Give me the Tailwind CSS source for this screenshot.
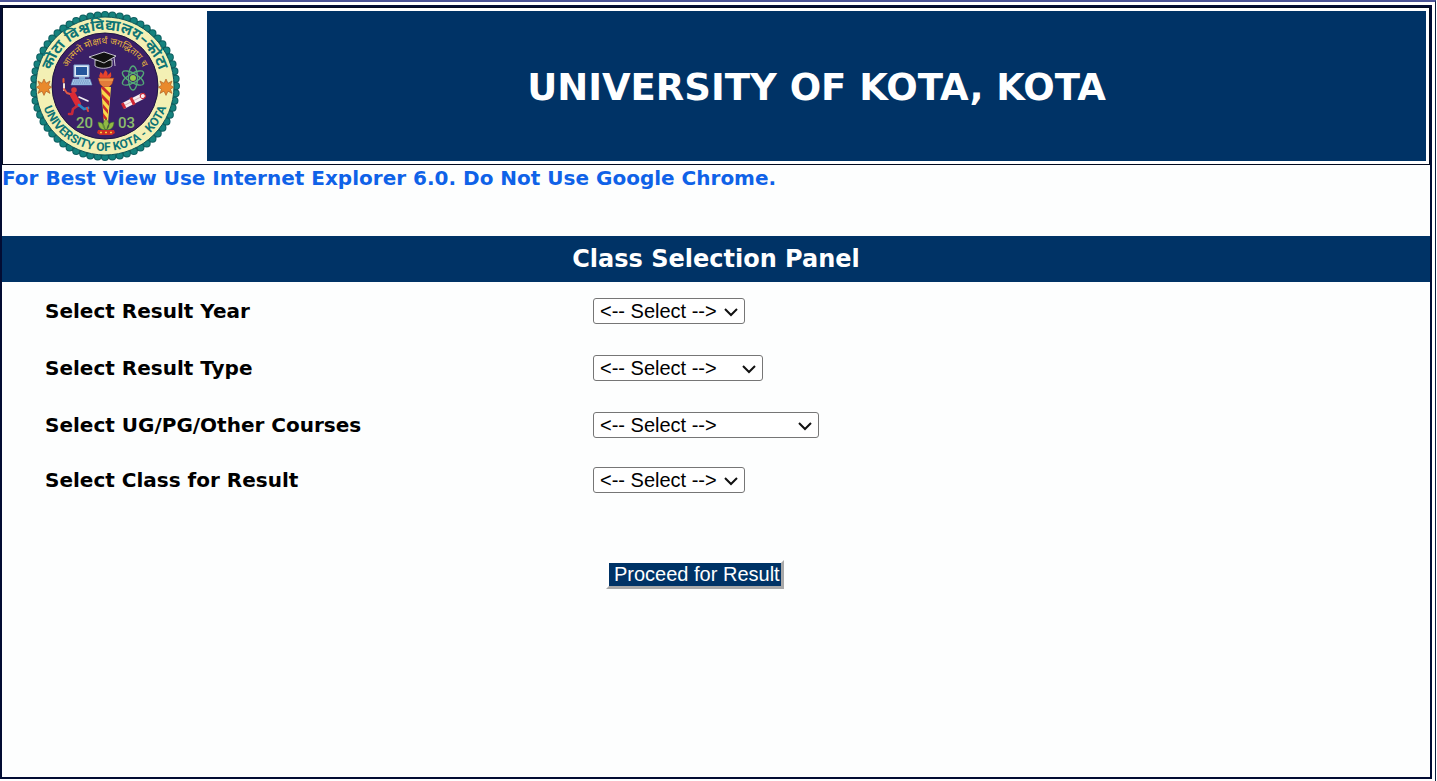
<!DOCTYPE html>
<html lang="en">
<head>
    <meta charset="UTF-8">
    <meta name="viewport" content="width=device-width, initial-scale=1.0">
    <title>University of Kota, Kota</title>
    <script src="https://cdn.jsdelivr.net/npm/@tailwindcss/browser@4"></script>
</head>
<body class="bg-white font-['DejaVu_Sans',sans-serif] text-black">
    <div class="mr-px flex min-h-screen flex-col border-t-2 border-r border-t-[#4a5296] border-r-[#0b1f3f] pt-[3px] pr-[3px] pb-0.5">
        <main class="flex-1 border-2 border-[#020c33] bg-[#fdfefe]">
            <!-- Header -->
            <header class="flex gap-[3px] border border-[#020a20] bg-white p-[3px]">
                <div class="flex w-[198px] shrink-0 justify-center">
                    <svg class="size-[150px]" viewBox="0 0 150 150" role="img" aria-label="University of Kota seal">
                        <defs>
                            <path id="arcTop" d="M19 75 A56 56 0 0 1 131 75"/>
                            <path id="arcMotto" d="M33 75 A42 42 0 0 1 117 75"/>
                            <path id="arcBottom" d="M10 75 A65 65 0 0 0 140 75"/>
                        </defs>
                        <!-- Scalloped rim and rings -->
                        <circle cx="75" cy="75" r="71" fill="#12807c"/>
                        <circle cx="75" cy="75" r="71" fill="none" stroke="#0f5f60" stroke-width="8" stroke-linecap="round" stroke-dasharray="0 1" pathLength="60"/>
                        <circle cx="75" cy="75" r="71" fill="none" stroke="#15827e" stroke-width="6" stroke-linecap="round" stroke-dasharray="0 1" pathLength="60"/>
                        <circle cx="75" cy="75" r="69" fill="#f3f0b4" stroke="#0d5558" stroke-width="1"/>
                        <circle cx="75" cy="75" r="53" fill="#3a2067" stroke="#1c1440" stroke-width="1"/>

                        <!-- Ring text -->
                        <text class="font-['Noto_Sans_Devanagari','Noto_Sans',sans-serif] font-bold" font-size="15" fill="#0e7475" text-anchor="middle"><textPath href="#arcTop" startOffset="50%">कोटा विश्वविद्यालय–कोटा</textPath></text>
                        <text class="font-['Noto_Sans_Devanagari','Noto_Sans',sans-serif]" font-size="9" fill="#e9b73c" text-anchor="middle"><textPath href="#arcMotto" startOffset="50%">आत्मनो मोक्षार्थं जगद्धिताय च</textPath></text>
                        <text class="font-[Roboto,sans-serif] font-bold" font-size="12" fill="#0e7475" text-anchor="middle"><textPath href="#arcBottom" startOffset="50%">UNIVERSITY OF KOTA - KOTA</textPath></text>

                        <!-- Stars -->
                        <g fill="#e98a2c" stroke="#a4521c" stroke-width="0.6">
                            <path d="M14 68l2 4.200 4-2.200-1.500 4.200 3 2-3 2 1.500 4.200-4-2.200-2 4.200-2-4.200-4 2.200 1.500-4.200-3-2 3-2L8 70l4 2.200z"/>
                            <path d="M136 68l2 4.200 4-2.200-1.500 4.200 3 2-3 2 1.500 4.200-4-2.200-2 4.200-2-4.200-4 2.200 1.500-4.200-3-2 3-2-1.500-4.200 4 2.200z"/>
                        </g>

                        <!-- Graduation cap -->
                        <g fill="#111" stroke="#e8e8ee" stroke-width="0.8" stroke-linejoin="round">
                            <path d="M65 49v6c4 3 13 3 17 0v-6z"/>
                            <path d="M59 46l15-5 12 4-12 7z"/>
                            <path d="M84 46l1 9" fill="none"/>
                        </g>

                        <!-- Computer -->
                        <path d="M44 54h15v12H44z" fill="#dce9f5" stroke="#7ea6d2" stroke-width="1"/>
                        <path d="M46 56h11v8H46z" fill="#24569c"/>
                        <path d="M49 66h6v2h-6z" fill="#8fb3da"/>
                        <path d="M43 68h17l2 6H41z" fill="#a9c8e8" stroke="#5f8fc6" stroke-width="0.6"/>
                        <path d="M44 70h15M43 72h17" stroke="#3f6da8" stroke-width="0.7" stroke-dasharray="1.500 0.700"/>

                        <!-- Atom -->
                        <g fill="none" stroke="#53a977" stroke-width="1.300">
                            <ellipse cx="103" cy="67" rx="4.500" ry="12"/>
                            <ellipse cx="103" cy="67" rx="4.500" ry="12" transform="rotate(60 103 67)"/>
                            <ellipse cx="103" cy="67" rx="4.500" ry="12" transform="rotate(120 103 67)"/>
                        </g>
                        <circle cx="103" cy="67" r="3" fill="#93c94b"/>

                        <!-- Torch -->
                        <path d="M70 67c-2-3 1-4 0-6 3 1 3 3 3 4 0-3 2-4 2-6 3 2 3 4 2 6 1-1 3-3 4-4 0 3 1 4-1 6z" fill="#e8432b"/>
                        <path d="M68 67h16l-2 6-3 3h-6l-3-3z" fill="#e27b3a" stroke="#94371d" stroke-width="0.5"/>
                        <path d="M69 69h14" stroke="#f6b35b" stroke-width="1"/>
                        <path d="M71 76h10l-3 36h-4z" fill="#f9d84a"/>
                        <path d="M71 77l9 9v-4l-6-6h-3zM72 87l7 8v-5l-7-7zM73 97l5 6v-4l-5-6zM73 106l4 5v-4l-4-5z" fill="#c92a2c"/>
                        <path d="M76 108c4 4 4 8 0 11-4-3-4-7 0-11zM68 111c4 0 7 3 7 8-4 0-7-3-7-8zM84 111c-4 0-7 3-7 8 4 0 7-3 7-8z" fill="#92b944" stroke="#386c2b" stroke-width="0.6"/>
                        <path d="M68 119h16l1 3-3 2H70l-3-2z" fill="#cd2d25"/>
                        <path d="M70 121.500h12" stroke="#f6cf3e" stroke-width="1.500" stroke-dasharray="2 3"/>

                        <!-- Athlete -->
                        <g fill="none" stroke-linecap="round" stroke-linejoin="round">
                            <path d="M34 79v-6" stroke="#f3e6d6" stroke-width="2"/>
                            <path d="M33.500 71v-3" stroke="#e85a30" stroke-width="2"/>
                            <path d="M34 78l3 4 6 2" stroke="#df5a45" stroke-width="2"/>
                            <path d="M49 86l9 4" stroke="#f1eef2" stroke-width="1.600"/>
                            <path d="M43 84l5 9" stroke="#dd2a34" stroke-width="6"/>
                            <path d="M47 95l-4 3-1 5-3 0" stroke="#c92a3a" stroke-width="2.600"/>
                            <path d="M49 94l5 4 4-1" stroke="#2c86c4" stroke-width="2.800"/>
                            <path d="M57 97l1 3" stroke="#dd4a3e" stroke-width="2"/>
                        </g>
                        <circle cx="44" cy="79" r="2.800" fill="#d83a3a"/>

                        <!-- Diploma -->
                        <g transform="rotate(-27 103 90)">
                            <path d="M92 87h22v6H92z" fill="#f6eef0"/>
                            <path d="M94 90h18" stroke="#d0a3ab" stroke-width="0.700"/>
                            <path d="M91 87h3v6h-3zM101 86h3v8h-3z" fill="#cf2735"/>
                            <circle cx="114" cy="90" r="2.500" fill="#f6eef0" stroke="#cf2735" stroke-width="1"/>
                        </g>

                        <!-- Founding year -->
                        <g class="font-[Roboto,sans-serif] font-medium" font-size="15" fill="#8cbd6c">
                            <text x="46" y="117">20</text>
                            <text x="88" y="117">03</text>
                        </g>
                    </svg>
                </div>
                <div class="flex flex-1 items-center justify-center bg-[#003366] pt-0.5">
                    <h1 class="text-[37px] leading-none font-bold text-white">UNIVERSITY OF KOTA, KOTA</h1>
                </div>
            </header>

            <!-- Browser notice -->
            <p class="mb-[45px] text-xl leading-[26px] font-bold text-[#0f62e8]">For Best View Use Internet Explorer 6.0. Do Not Use Google Chrome.</p>

            <!-- Class selection -->
            <h2 class="bg-[#003366] text-center text-2xl leading-[46px] font-bold text-white">Class Selection Panel</h2>
            <form class="grid grid-cols-[548fr_837fr] grid-rows-[57px_57px_57px_54px] items-center pl-[43px]">
                <label for="year" class="text-xl font-bold">Select Result Year</label>
                <div class="relative w-[152px]">
                    <select id="year" class="block h-[26px] w-full appearance-none rounded-[3px] border border-[#767676] bg-white pl-1.5 font-['Liberation_Sans',sans-serif] text-xl leading-6">
                        <option>&lt;-- Select --&gt;</option>
                    </select>
                    <svg class="pointer-events-none absolute top-2 right-1.5 h-3 w-4" viewBox="0 0 16 12" fill="none" stroke="#111" stroke-width="2"><path d="M2 3l6 6 6-6"/></svg>
                </div>

                <label for="type" class="text-xl font-bold">Select Result Type</label>
                <div class="relative w-[170px]">
                    <select id="type" class="block h-[26px] w-full appearance-none rounded-[3px] border border-[#767676] bg-white pl-1.5 font-['Liberation_Sans',sans-serif] text-xl leading-6">
                        <option>&lt;-- Select --&gt;</option>
                    </select>
                    <svg class="pointer-events-none absolute top-2 right-1.5 h-3 w-4" viewBox="0 0 16 12" fill="none" stroke="#111" stroke-width="2"><path d="M2 3l6 6 6-6"/></svg>
                </div>

                <label for="course" class="text-xl font-bold">Select UG/PG/Other Courses</label>
                <div class="relative w-[226px]">
                    <select id="course" class="block h-[26px] w-full appearance-none rounded-[3px] border border-[#767676] bg-white pl-1.5 font-['Liberation_Sans',sans-serif] text-xl leading-6">
                        <option>&lt;-- Select --&gt;</option>
                    </select>
                    <svg class="pointer-events-none absolute top-2 right-1.5 h-3 w-4" viewBox="0 0 16 12" fill="none" stroke="#111" stroke-width="2"><path d="M2 3l6 6 6-6"/></svg>
                </div>

                <label for="class" class="text-xl font-bold">Select Class for Result</label>
                <div class="relative w-[152px]">
                    <select id="class" class="block h-[26px] w-full appearance-none rounded-[3px] border border-[#767676] bg-white pl-1.5 font-['Liberation_Sans',sans-serif] text-xl leading-6">
                        <option>&lt;-- Select --&gt;</option>
                    </select>
                    <svg class="pointer-events-none absolute top-2 right-1.5 h-3 w-4" viewBox="0 0 16 12" fill="none" stroke="#111" stroke-width="2"><path d="M2 3l6 6 6-6"/></svg>
                </div>

                <button type="submit" class="col-start-2 mt-[53px] ml-[13px] justify-self-start border-[3px] border-t-white border-r-[#a9a9a9] border-b-[#a9a9a9] border-l-white bg-[#003366] pr-px pl-[5px] font-['Liberation_Sans',sans-serif] text-xl leading-[23px] text-white">Proceed for Result</button>
            </form>
        </main>
    </div>
</body>
</html>
